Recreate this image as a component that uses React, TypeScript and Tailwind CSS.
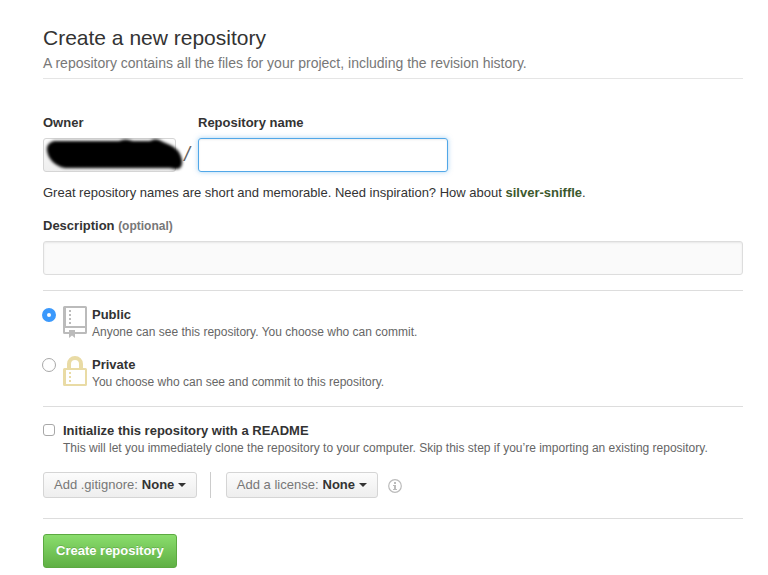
import type { ReactNode } from 'react';

function Caret() {
  return (
    <svg aria-hidden="true" className="pointer-events-none absolute right-0 top-1/2 -mt-0.5" width="8" height="4" viewBox="0 0 8 4">
      <path d="M0 0h8L4 4z" fill="#333" />
    </svg>
  );
}

function Picker({ id, label }: { id: string; label: string }) {
  return (
    <div className="flex h-[26px] items-center gap-1 rounded-[3px] border border-[#d5d5d5] bg-linear-to-b from-[#fcfcfc] to-[#eeeeee] px-2.5 text-[13px] leading-4">
      <label htmlFor={id} className="text-[#777]">{label}</label>
      <div className="relative">
        <select id={id} className="block w-11 appearance-none bg-transparent font-bold text-[#333] outline-none">
          <option>None</option>
        </select>
        <Caret />
      </div>
    </div>
  );
}

function RepoIcon() {
  return (
    <svg aria-hidden="true" width="24" height="32" viewBox="0 0 24 32" fill="#bbb">
      <path fillRule="evenodd" d="M1.500 0H22.500Q24 0 24 1.500V26.500Q24 28 22.500 28H12V32L9 29.500L6 32V28H1.500Q0 28 0 26.500V1.500Q0 0 1.500 0ZM3 2V20H22V2ZM2 22V26H6V24H12V26H22V22Z" />
      <path d="M6 4h2v2H6zM6 8h2v2H6zM6 12h2v2H6zM6 16h2v2H6z" />
    </svg>
  );
}

function LockIcon() {
  return (
    <svg aria-hidden="true" width="24" height="32" viewBox="0 0 24 32" fill="#e9dba5">
      <path fillRule="evenodd" d="M4 12V8a8 8 0 0 1 16 0V12H22.500Q24 12 24 13.500V28.500Q24 30 22.500 30H1.500Q0 30 0 28.500V13.500Q0 12 1.500 12ZM8 12H16V8a4 4 0 0 0-8 0ZM3 14V28H22V14Z" />
      <path d="M6 16h2v2H6zM6 20h2v2H6zM6 24h2v2H6z" />
    </svg>
  );
}

function Visibility({ id, title, note, icon, checked }: { id: string; title: string; note: string; icon: ReactNode; checked?: boolean }) {
  return (
    <div className="-ml-px flex h-[34px] items-start">
      <input
        type="radio"
        name="visibility"
        id={id}
        defaultChecked={checked}
        className="mt-0.5 size-3.5 shrink-0 appearance-none rounded-full border border-[#a8a8a8] bg-white checked:border-[5px] checked:border-[#3b99fc]"
      />
      <label htmlFor={id} className="ml-[7px] flex gap-[5px]">
        {icon}
        <span>
          <span className="block text-[13px] leading-[18px] font-bold">{title}</span>
          <span className="block text-[12px] leading-4 text-[#666]">{note}</span>
        </span>
      </label>
    </div>
  );
}

export default function App() {
  return (
    <main className="min-h-screen bg-white pt-6 pr-[25px] pb-[7px] pl-[43px] font-['Liberation_Sans',Arial,sans-serif] text-[13px] leading-[18px] text-[#333]">
      <header className="border-b border-[#e5e5e5] pb-1">
        <h1 className="text-[21px] leading-7">Create a new repository</h1>
        <p className="text-[14px] leading-[22px] text-[#777]">A repository contains all the files for your project, including the revision history.</p>
      </header>

      <form onSubmit={(event) => event.preventDefault()}>
        <div className="mt-[34px] flex">
          <div className="w-[133px]">
            <label htmlFor="owner" className="block leading-5 font-bold">Owner</label>
            <div className="relative mt-[5px]">
              <select id="owner" className="block h-[34px] w-full appearance-none rounded-[3px] border border-[#d5d5d5] bg-linear-to-b from-[#fcfcfc] to-[#eeeeee] px-2.5">
                <option aria-label="Owner account" />
              </select>
              <svg aria-hidden="true" className="pointer-events-none absolute top-0 left-0" width="142" height="34" viewBox="0 0 142 34">
                <defs>
                  <filter id="soft" x="-10%" y="-30%" width="120%" height="160%">
                    <feGaussianBlur stdDeviation="1.400" />
                  </filter>
                </defs>
                <path filter="url(#soft)" d="M11 3H76Q82 0 90 3H107Q113 -1 120 4L127 7Q137 11 139 22Q140 32 132 31L127 30H22Q11 28 6 19Q0 6 11 3Z" fill="#000" />
              </svg>
            </div>
          </div>
          <span className="mt-[25px] w-[22px] text-center text-[20px] leading-8 text-[#666] italic">/</span>
          <div>
            <label htmlFor="repo" className="block leading-5 font-bold">Repository name</label>
            <input id="repo" className="mt-[5px] block h-[34px] w-[250px] rounded-[3px] border border-[#51a7e8] px-2 shadow-[inset_0_1px_2px_rgba(0,0,0,0.075),0_0_5px_rgba(81,167,232,0.5)] outline-none" />
          </div>
        </div>
        <p className="mt-3 leading-[18px]">
          Great repository names are short and memorable. Need inspiration? How about <strong className="text-[#3c582d]">silver-sniffle</strong>.
        </p>

        <label htmlFor="description" className="mt-3.5 block leading-5 font-bold">
          Description <span className="text-[12px] text-[#777]">(optional)</span>
        </label>
        <input id="description" className="mt-[5px] block h-[34px] w-full rounded-[3px] border border-[#ddd] bg-[#fafafa] px-2 shadow-[inset_0_1px_2px_rgba(0,0,0,0.075)] outline-none" />

        <fieldset className="mt-[15px] flex flex-col gap-4 border-y border-[#ddd] pt-[15px] pb-4">
          <Visibility id="public" title="Public" note="Anyone can see this repository. You choose who can commit." icon={<RepoIcon />} checked />
          <Visibility id="private" title="Private" note="You choose who can see and commit to this repository." icon={<LockIcon />} />
        </fieldset>

        <div className="mt-[15px] flex items-start gap-2">
          <input type="checkbox" id="readme" className="mt-0.5 size-3 shrink-0 appearance-none rounded-[3px] border border-[#a8a8a8] bg-white checked:bg-[#3b99fc]" />
          <label htmlFor="readme">
            <span className="block leading-[18px] font-bold">Initialize this repository with a README</span>
            <span className="block text-[12px] leading-4 text-[#666]">This will let you immediately clone the repository to your computer. Skip this step if you’re importing an existing repository.</span>
          </label>
        </div>

        <div className="mt-4 flex items-center border-b border-[#ddd] pb-5">
          <Picker id="gitignore" label="Add .gitignore:" />
          <div className="mr-[15px] ml-[13px] h-[26px] w-px bg-[#ccc]" />
          <Picker id="license" label="Add a license:" />
          <svg role="img" aria-label="License information" className="mt-0.5 ml-2.5" width="14" height="14" viewBox="0 0 14 14" fill="#bbb">
            <circle cx="7" cy="7" r="6.300" fill="none" stroke="#bbb" strokeWidth="1.200" />
            <path d="M6 3h2v2H6zM5 6h3v4h1v1H5v-1h1V7H5z" />
          </svg>
        </div>

        <button type="submit" className="mt-[15px] h-[34px] rounded-[3px] border border-[#5ca941] bg-linear-to-b from-[#8add6d] to-[#60b044] px-3 text-[13px] font-bold text-white [text-shadow:0_-1px_0_rgba(0,0,0,0.15)]">
          Create repository
        </button>
      </form>
    </main>
  );
}
